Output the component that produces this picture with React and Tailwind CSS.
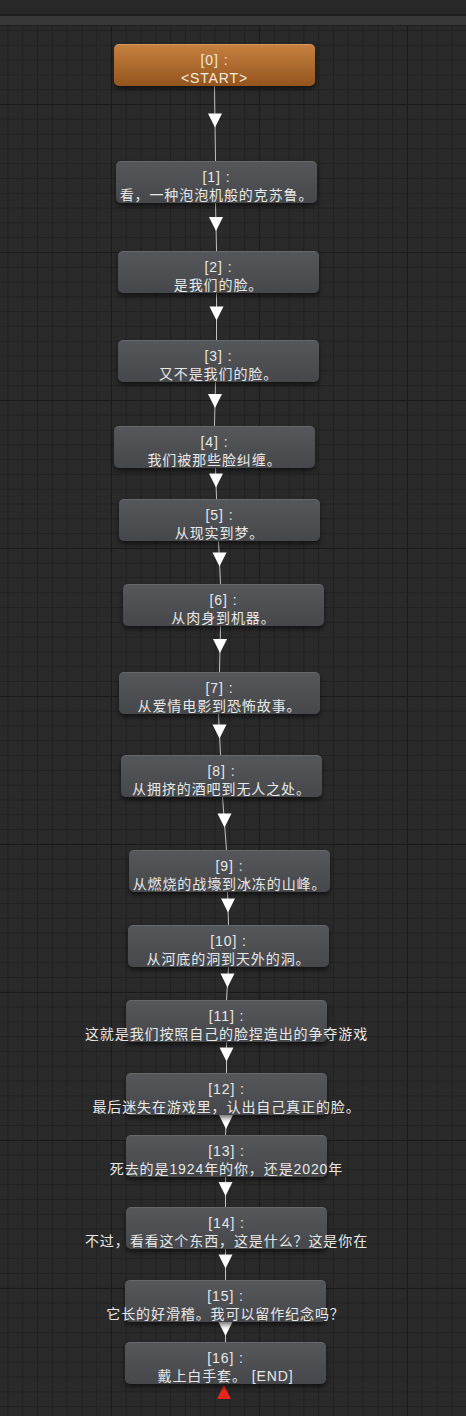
import React from 'react';

// Nodes of the dialogue graph (canvas coordinates, canvas starts at y=26)
const nodes = [
  { id: 0, pos: 'left-[114px] top-[18px]', text: '<START>', start: true },
  { id: 1, pos: 'left-[116px] top-[135px]', text: '看，一种泡泡机般的克苏鲁。' },
  { id: 2, pos: 'left-[118px] top-[225px]', text: '是我们的脸。' },
  { id: 3, pos: 'left-[118px] top-[314px]', text: '又不是我们的脸。' },
  { id: 4, pos: 'left-[114px] top-[400px]', text: '我们被那些脸纠缠。' },
  { id: 5, pos: 'left-[119px] top-[473px]', text: '从现实到梦。' },
  { id: 6, pos: 'left-[123px] top-[558px]', text: '从肉身到机器。' },
  { id: 7, pos: 'left-[119px] top-[646px]', text: '从爱情电影到恐怖故事。' },
  { id: 8, pos: 'left-[121px] top-[729px]', text: '从拥挤的酒吧到无人之处。' },
  { id: 9, pos: 'left-[129px] top-[824px]', text: '从燃烧的战壕到冰冻的山峰。' },
  { id: 10, pos: 'left-[128px] top-[899px]', text: '从河底的洞到天外的洞。' },
  { id: 11, pos: 'left-[126px] top-[974px]', text: '这就是我们按照自己的脸捏造出的争夺游戏' },
  { id: 12, pos: 'left-[126px] top-[1047px]', text: '最后迷失在游戏里，认出自己真正的脸。' },
  { id: 13, pos: 'left-[126px] top-[1109px]', text: '死去的是1924年的你，还是2020年' },
  { id: 14, pos: 'left-[126px] top-[1181px]', text: '不过，看看这个东西，这是什么？这是你在' },
  { id: 15, pos: 'left-[125px] top-[1254px]', text: '它长的好滑稽。我可以留作纪念吗？' },
  { id: 16, pos: 'left-[125px] top-[1316px]', text: '戴上白手套。 [END]' },
];

// top y of each node, same numbers as above, for the links
const tops = [18, 135, 225, 314, 400, 473, 558, 646, 729, 824, 899, 974, 1047, 1109, 1181, 1254, 1316];

// x at the bottom of node i and at the top of node i+1
const links = [
  [214.5, 215.5], [215.5, 216.5], [216.5, 216.5], [215.5, 214.5],
  [215.5, 216.5], [218.5, 220.5], [220.5, 219.5], [218.5, 220.5],
  [222.5, 226.5], [227.5, 228.5], [228.5, 226.5], [226.5, 226.5],
  [226.5, 225.5], [225.5, 225.5], [225.5, 225.5], [225.5, 225.5],
];

function Links() {
  return (
    <svg className="absolute left-0 top-0" width="466" height="1390">
      {links.map(([x1, x2], i) => {
        const y1 = tops[i] + 42;
        const y2 = tops[i + 1];
        const cx = (x1 + x2) / 2;
        const my = (y1 + y2) / 2;
        return (
          <g key={i}>
            <line x1={x1} y1={y1} x2={x2} y2={y2} stroke="#c4c4c4" strokeWidth="1" />
            <polygon points={`${cx - 7},${my - 10} ${cx + 7},${my - 10} ${cx},${my + 4}`} fill="#ffffff" />
          </g>
        );
      })}
      <polygon points="217,1373 231,1373 224,1359" fill="#e3271c" />
    </svg>
  );
}

function Node({ node }) {
  const skin = node.start
    ? 'bg-[linear-gradient(to_bottom,#c6803f,#93551e)] border-t border-[#d9985a] text-[#f3e9df]'
    : 'bg-[linear-gradient(to_bottom,#55575b,#45474a)] border-t border-[#65676b] text-[#e8e8e8]';
  return (
    <div className={`absolute ${node.pos} w-[201px] h-[42px] rounded-[5px] shadow-[0_3px_5px_rgba(0,0,0,0.55)] ${skin}`}>
      <div className="flex flex-col items-center pt-[6px] text-[14px] leading-[18px] tracking-[0.9px] whitespace-nowrap">
        <span>[{node.id}] :</span>
        <span>{node.text}</span>
      </div>
    </div>
  );
}

export default function App() {
  return (
    <div className="w-[466px] h-[1416px] overflow-hidden flex flex-col bg-[#282828] font-['Liberation_Sans','Noto_Sans_CJK_SC',sans-serif]">
      {/* title strip */}
      <div className="h-[14px] bg-[#282828]" />
      <div className="h-[2px] bg-[#1e1e1e]" />
      <div className="h-[9px] bg-[#383838]" />
      <div className="h-[1px] bg-[#1f1f1f]" />

      {/* graph canvas */}
      <div className="relative flex-1 bg-[#2a2a2a] [background-image:linear-gradient(to_right,#1a1a1a_1px,transparent_1px),linear-gradient(to_bottom,#1a1a1a_1px,transparent_1px),linear-gradient(to_right,#212121_1px,transparent_1px),linear-gradient(to_bottom,#212121_1px,transparent_1px)] [background-size:148px_148px,148px_148px,14.8px_14.8px,14.8px_14.8px] [background-position:111px_78px,111px_78px,7.4px_4px,7.4px_4px]">
        <Links />
        {nodes.map(n => (
          <Node key={n.id} node={n} />
        ))}
      </div>
    </div>
  );
}
